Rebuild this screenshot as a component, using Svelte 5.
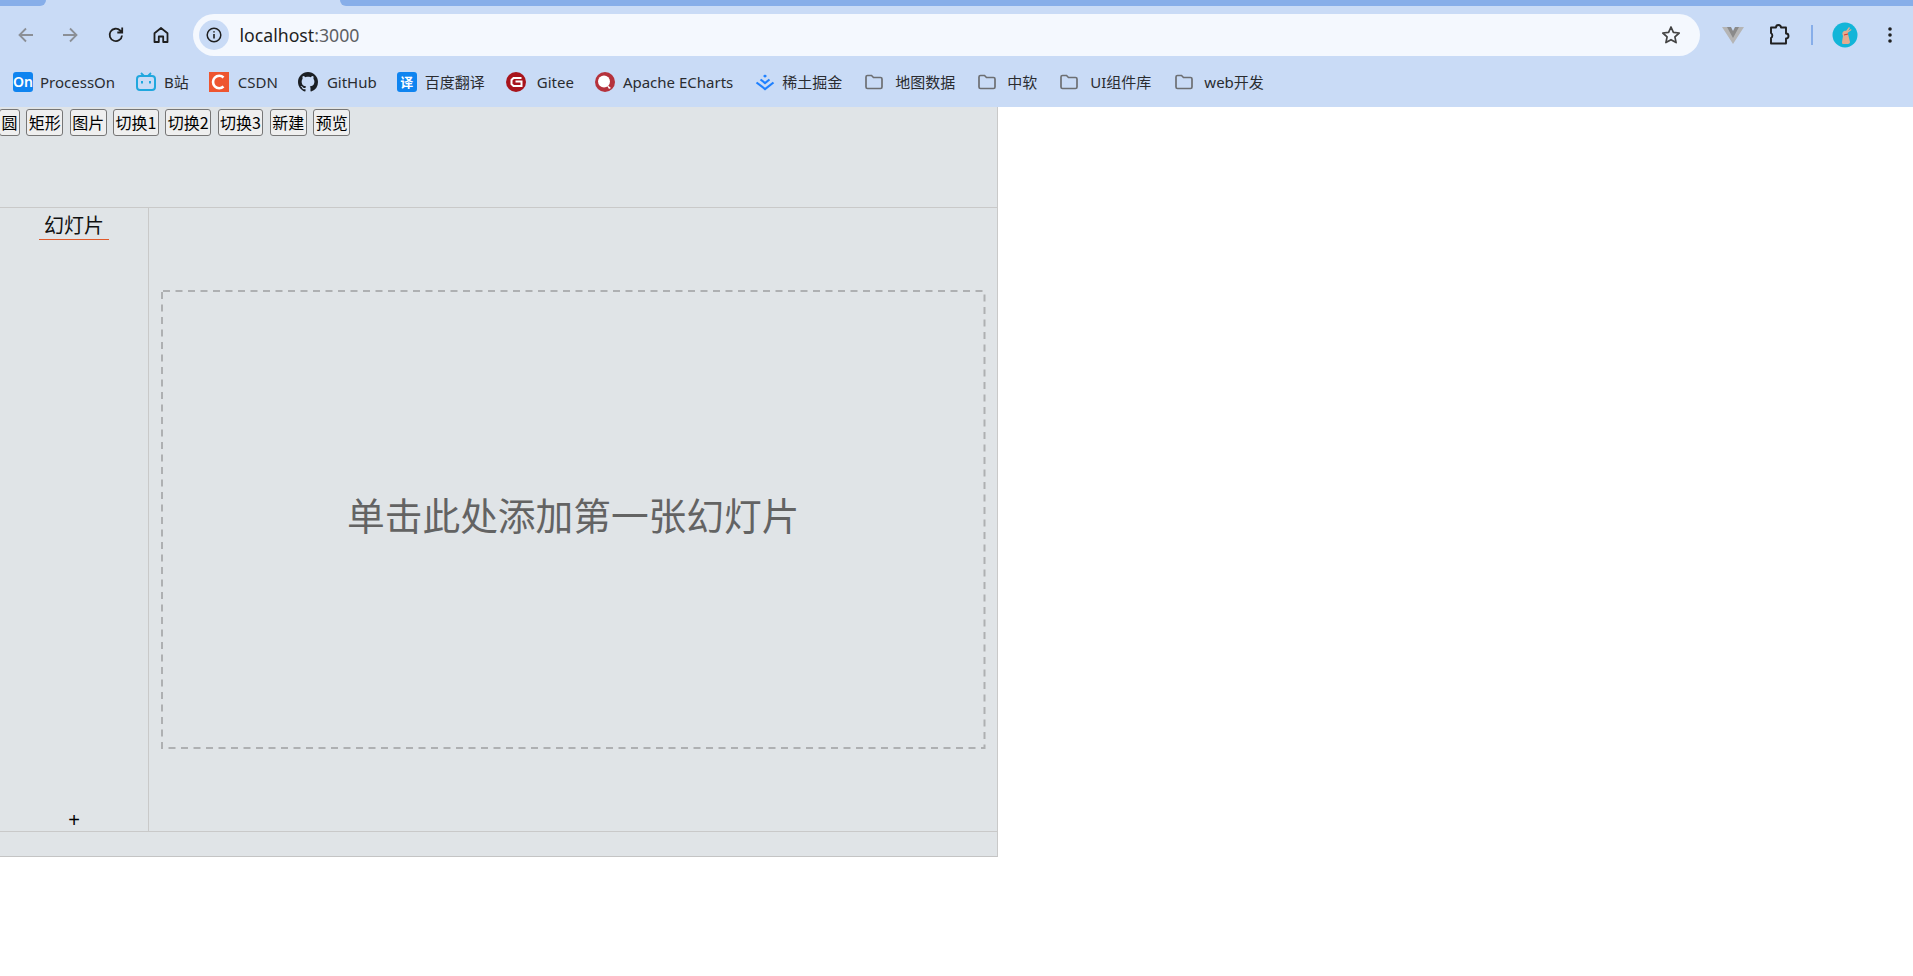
<script lang="ts">
  const buttons = ['圆', '矩形', '图片', '切换1', '切换2', '切换3', '新建', '预览'];
  const marks = [
    { icon: 'on', label: 'ProcessOn', gap: 7, next: 21 },
    { icon: 'bili', label: 'B站', gap: 8, next: 20 },
    { icon: 'csdn', label: 'CSDN', gap: 9, next: 20 },
    { icon: 'github', label: 'GitHub', gap: 9, next: 20 },
    { icon: 'fanyi', label: '百度翻译', gap: 8, next: 21 },
    { icon: 'gitee', label: 'Gitee', gap: 11, next: 21 },
    { icon: 'echarts', label: 'Apache ECharts', gap: 8, next: 22 },
    { icon: 'juejin', label: '稀土掘金', gap: 7, next: 22 },
    { icon: 'folder', label: '地图数据', gap: 11, next: 22 },
    { icon: 'folder', label: '中软', gap: 10, next: 22 },
    { icon: 'folder', label: 'UI组件库', gap: 11, next: 23 },
    { icon: 'folder', label: 'web开发', gap: 10, next: 0 }
  ];
</script>

<div class="browser">
  <div class="tabstrip">
    <div class="tab-left"></div>
    <div class="tab-active"></div>
    <div class="tab-right"></div>
  </div>

  <div class="toolbar">
    <svg class="nav first" viewBox="0 0 20 20"><path d="M17 10H4M10 3.500 3.500 10l6.500 6.500" fill="none" stroke="#8b8f96" stroke-width="1.800"/></svg>
    <svg class="nav second" viewBox="0 0 20 20"><path d="M3 10h13M10 3.500l6.500 6.500-6.500 6.500" fill="none" stroke="#8b8f96" stroke-width="1.800"/></svg>
    <svg class="nav third" viewBox="0 0 20 20"><path d="M16 10.500a6.200 6.200 0 1 1-1.800-5L16 7.200M16.200 2.600v4.900h-4.900" fill="none" stroke="#1f1f1f" stroke-width="1.800"/></svg>
    <svg class="nav fourth" viewBox="0 0 20 20"><path d="M3.500 17V8.200L10 3l6.500 5.200V17h-4.300v-5.500H7.800V17z" fill="none" stroke="#1f1f1f" stroke-width="1.800" stroke-linejoin="round"/></svg>

    <div class="omnibox">
      <span class="info">
        <svg viewBox="0 0 20 20" width="20" height="20"><circle cx="10" cy="10" r="6.800" fill="none" stroke="#1f1f1f" stroke-width="1.500"/><path d="M10 9v4.500M10 6.200v1.400" stroke="#1f1f1f" stroke-width="1.600"/></svg>
      </span>
      <span class="url">localhost<span class="port">:3000</span></span>
      <svg class="star" viewBox="0 0 22 22" width="22" height="22"><path d="m11 3 2.400 5.400 5.800.6-4.300 3.900 1.200 5.700L11 15.700l-5.100 2.900 1.200-5.700L2.800 9l5.800-.6z" fill="none" stroke="#444" stroke-width="1.700" stroke-linejoin="round"/></svg>
    </div>

    <svg class="vue" viewBox="0 0 22 18" width="22" height="18"><path d="M0 1h7l4 7 4-7h7L11 18z" fill="#b5b5b5"/><path d="M5 1h4l2 4 2-4h4L11 12z" fill="#8a8a8a"/></svg>
    <svg class="puzzle" viewBox="0 0 22 22" width="22" height="22"><path d="M3 4h5a2.500 2.500 0 0 1 5 0h5v6a2.500 2.500 0 0 1 0 5v5H3v-5.500a3 3 0 0 0 0-5z" transform="translate(0 -.5)" fill="none" stroke="#1f1f1f" stroke-width="1.900" stroke-linejoin="round"/></svg>
    <span class="divider"></span>
    <svg class="avatar" viewBox="0 0 26 26" width="26" height="26">
      <circle cx="13" cy="13" r="12.500" fill="#12b5d8"/>
      <path d="M12 9c2-1 4 0 4 3l2 8c0 1-1 2-2 2h-5c-1 0-1-1-1-2l1-6c-1-2-1-4 1-5z" fill="#e5ab8e"/>
      <path d="M14 9l3-4 1 1-2 3 3-2 .5 1-4 3z" fill="#e5ab8e"/>
      <path d="M12 13l4-1" stroke="#d8352d" stroke-width="1"/>
    </svg>
    <svg class="dots" viewBox="0 0 6 20" width="6" height="20"><circle cx="3" cy="4" r="1.800" fill="#1f1f1f"/><circle cx="3" cy="10" r="1.800" fill="#1f1f1f"/><circle cx="3" cy="16" r="1.800" fill="#1f1f1f"/></svg>
  </div>

  <div class="bookmarks">
    {#each marks as m}
      <div class="mark" style="gap: {m.gap}px; margin-right: {m.next}px">
        {#if m.icon === 'on'}
          <svg viewBox="0 0 20 20" width="20" height="20"><rect width="20" height="20" rx="3" fill="#0f84f0"/><text x="10" y="15" text-anchor="middle" class="ico-text">On</text></svg>
        {:else if m.icon === 'bili'}
          <svg viewBox="0 0 20 20" width="20" height="20"><path d="M5 1l3 3M15 1l-3 3" stroke="#20a7de" stroke-width="1.800"/><rect x="1" y="4" width="18" height="14" rx="3" fill="none" stroke="#20a7de" stroke-width="2"/><path d="M6 9v2.500M14 9v2.500" stroke="#20a7de" stroke-width="2"/></svg>
        {:else if m.icon === 'csdn'}
          <svg viewBox="0 0 20 20" width="20" height="20"><rect width="20" height="20" fill="#ee5530"/><path d="M14.500 5.500a6.200 6.200 0 1 0 0 9" fill="none" stroke="#fff" stroke-width="2.600"/></svg>
        {:else if m.icon === 'github'}
          <svg viewBox="0 0 16 16" width="20" height="20"><path fill="#1b1f24" d="M8 0C3.580 0 0 3.580 0 8c0 3.540 2.290 6.530 5.470 7.590.4.070.55-.17.55-.38 0-.19-.01-.82-.01-1.490-2.010.37-2.530-.49-2.690-.94-.09-.23-.48-.94-.82-1.130-.28-.15-.68-.52-.01-.53.630-.01 1.080.58 1.230.82.720 1.210 1.870.87 2.330.66.070-.52.280-.87.510-1.070-1.780-.2-3.640-.89-3.640-3.950 0-.87.310-1.590.82-2.150-.08-.2-.36-1.020.08-2.120 0 0 .67-.21 2.200.82.640-.18 1.320-.27 2-.27s1.360.09 2 .27c1.530-1.040 2.200-.82 2.200-.82.440 1.100.16 1.920.08 2.120.51.560.82 1.270.82 2.150 0 3.070-1.870 3.750-3.650 3.950.29.250.54.730.54 1.480 0 1.070-.01 1.930-.01 2.200 0 .21.150.46.550.38A8.010 8.010 0 0 0 16 8c0-4.420-3.580-8-8-8z"/></svg>
        {:else if m.icon === 'fanyi'}
          <span class="fanyi">译</span>
        {:else if m.icon === 'gitee'}
          <svg viewBox="0 0 20 20" width="20" height="20"><circle cx="10" cy="10" r="10" fill="#a8141c"/><path d="M15.500 6H7.500L5.500 8v4l2 2h8V9.500H9.500" fill="none" stroke="#fff" stroke-width="2"/></svg>
        {:else if m.icon === 'echarts'}
          <svg viewBox="0 0 20 20" width="20" height="20"><circle cx="10" cy="10" r="10" fill="#b5323c"/><circle cx="9" cy="9.500" r="6" fill="#fff"/><path d="M11 12l5 4-2 1z" fill="#fff"/></svg>
        {:else if m.icon === 'juejin'}
          <svg viewBox="0 0 20 20" width="20" height="20"><path d="M10 2.500l2 1.600-2 1.600-2-1.600z" fill="#1e80ff"/><path d="M5.500 7.500 10 11l4.500-3.500M1.500 10.500 10 17l8.500-6.500" fill="none" stroke="#1e80ff" stroke-width="2.200"/></svg>
        {:else}
          <svg viewBox="0 0 20 20" width="20" height="20"><path d="M2 5a1.500 1.500 0 0 1 1.500-1.500h4L9.500 5.500h7A1.500 1.500 0 0 1 18 7v8a1.500 1.500 0 0 1-1.500 1.500h-13A1.500 1.500 0 0 1 2 15z" fill="none" stroke="#6d6f73" stroke-width="1.700"/></svg>
        {/if}
        <span>{m.label}</span>
      </div>
    {/each}
  </div>
</div>

<div class="app">
  <div class="head">
    {#each buttons as b}
      <button type="button">{b}</button>
    {/each}
  </div>
  <div class="body">
    <aside class="side">
      <div class="side-title">幻灯片</div>
      <div class="add">+</div>
    </aside>
    <main class="stage">
      <div class="placeholder">
        <!-- dash pattern is longer than a css dashed border gives -->
        <svg class="dash"><rect class="dash-rect"/></svg>
        <span class="hint">单击此处添加第一张幻灯片</span>
      </div>
    </main>
  </div>
  <div class="foot"></div>
</div>

<style>
  :global(body) {
    background: #fff;
    font-family: "Noto Sans", "Noto Sans CJK SC", sans-serif;
    overflow: hidden;
  }

  .browser {
    background: #c9dbf6;
    height: 107px;
  }

  .tabstrip {
    display: flex;
    height: 6px;
    background: #c9dbf6;
  }

  .tab-left {
    width: 46px;
    background: #87aee9;
    border-bottom-right-radius: 8px;
  }

  .tab-active {
    width: 294px;
  }

  .tab-right {
    flex: 1;
    background: #87aee9;
    border-bottom-left-radius: 8px;
  }

  .toolbar {
    display: flex;
    align-items: center;
    height: 42px;
    margin-top: 8px;
  }

  .nav {
    width: 20px;
    height: 20px;
    flex: none;
  }

  .first { margin-left: 16px; }
  .second { margin-left: 24px; }
  .third { margin-left: 26px; }
  .fourth { margin-left: 25px; }

  .omnibox {
    display: flex;
    align-items: center;
    width: 1507px;
    height: 42px;
    margin-left: 22px;
    border-radius: 21px;
    background: #f4f8fe;
    flex: none;
  }

  .info {
    display: flex;
    align-items: center;
    justify-content: center;
    width: 30px;
    height: 30px;
    margin-left: 6px;
    border-radius: 50%;
    background: #c9dbf6;
  }

  .url {
    margin-left: 10.500px;
    font-size: 17.700px;
    color: #1f1f1f;
  }

  .port { color: #5d6064; }

  .star { margin-left: auto; margin-right: 18px; }

  .vue { margin-left: 22px; }
  .puzzle { margin-left: 24px; }

  .divider {
    width: 2px;
    height: 20px;
    margin-left: 21px;
    background: #87aee9;
  }

  .avatar { margin-left: 19px; }
  .dots { margin-left: 29px; }

  .bookmarks {
    display: flex;
    align-items: center;
    height: 51px;
    box-sizing: border-box;
    padding-left: 13px;
    font-size: 15px;
    color: #2a2c30;
  }

  .mark {
    display: flex;
    align-items: center;
    white-space: nowrap;
  }

  .mark svg { flex: none; }

  .ico-text {
    font-family: "Noto Sans", sans-serif;
    font-size: 14px;
    font-weight: 600;
    fill: #fff;
  }

  .fanyi {
    width: 20px;
    height: 20px;
    border-radius: 3px;
    background: #0f84f0;
    color: #fff;
    font-size: 13px;
    font-weight: 700;
    line-height: 20px;
    text-align: center;
  }

  .app {
    display: flex;
    flex-direction: column;
    width: 998px;
    height: 750px;
    background: #e0e4e7;
    border-right: 1px solid #c9c9c9;
    border-bottom: 1px solid #c4c4c4;
    box-sizing: border-box;
    overflow: hidden;
    font-family: "Noto Sans CJK SC", sans-serif;
  }

  .head {
    display: flex;
    align-items: flex-start;
    gap: 6.350px;
    height: 101px;
    margin-left: -1px;
    padding-top: 2px;
    box-sizing: border-box;
    border-bottom: 1px solid #c9c9c9;
  }

  button {
    height: 27px;
    padding: 0 1.500px;
    border: 1px solid #767676;
    border-radius: 3px;
    background: #efefef;
    color: #000;
    font: 16px "Noto Sans CJK SC", sans-serif;
    line-height: 25px;
    white-space: nowrap;
  }

  .body {
    display: flex;
    flex: 1;
    min-height: 0;
    border-bottom: 1px solid #c9c9c9;
  }

  .side {
    display: flex;
    flex-direction: column;
    align-items: center;
    width: 149px;
    box-sizing: border-box;
    border-right: 1px solid #c9c9c9;
  }

  .side-title {
    width: 70px;
    margin-top: 4px;
    padding-bottom: 1px;
    border-bottom: 1px solid #e0592a;
    font-size: 20px;
    line-height: 26px;
    text-align: center;
    color: #111;
  }

  .add {
    margin-top: auto;
    margin-bottom: -1px;
    font-family: "Liberation Sans", sans-serif;
    font-size: 20px;
    line-height: 24px;
    color: #000;
  }

  .stage {
    flex: 1;
    display: flex;
    align-items: center;
    padding: 0 11.500px 0 12px;
  }

  .placeholder {
    position: relative;
    flex: 1;
    display: flex;
    align-items: center;
    justify-content: center;
    height: 459px;
    padding-bottom: 12px;
    box-sizing: border-box;
    font-size: 37.700px;
    color: #636363;
  }

  .dash {
    position: absolute;
    inset: 0;
    width: 100%;
    height: 100%;
  }

  .dash-rect {
    x: 1px;
    y: 1px;
    width: calc(100% - 2px);
    height: calc(100% - 2px);
    fill: none;
    stroke: #aeb0b2;
    stroke-width: 2;
    stroke-dasharray: 7 5.500;
    stroke-dashoffset: -1;
  }

  .foot {
    height: 24px;
    flex: none;
  }
</style>
